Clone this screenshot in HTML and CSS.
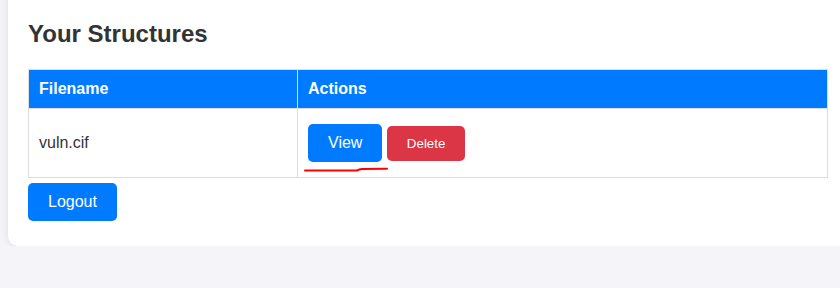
FILE: index.html
```html
<!DOCTYPE html>
<html lang="en">
<head>
    <meta charset="UTF-8">
    <title>Your Structures</title>
    <link rel="stylesheet" href="styles.css">
</head>
<body>
    <div class="container">
        <h2>Your Structures</h2>

        <table class="structures">
            <colgroup>
                <col class="col-name">
                <col>
            </colgroup>
            <thead>
                <tr>
                    <th>Filename</th>
                    <th>Actions</th>
                </tr>
            </thead>
            <tbody>
                <tr>
                    <td>vuln.cif</td>
                    <td class="actions">
                        <a href="#" class="btn">View</a>
                        <button class="btn-delete">Delete</button>
                        <!-- trait rouge à main levée -->
                        <svg class="scribble" width="90" height="7" viewBox="0 0 90 7">
                            <path d="M3 4.6 L55 4.6 Q57 3 60 2.9 L85 2.7" fill="none" stroke="#ff0000" stroke-width="2" stroke-linecap="round"/>
                        </svg>
                    </td>
                </tr>
            </tbody>
        </table>

        <a href="#" class="btn btn-logout">Logout</a>
    </div>
</body>
</html>
```

FILE: styles.css
```css
html, body {
    overflow: hidden;
}

body {
    font-family: "Liberation Sans", Arial, sans-serif;
    margin: 0;
    padding: 0 8px;
    background: #f4f4f9;
    color: #333;
}

.container {
    width: 800px;
    margin-top: -20px;
    padding: 20px;
    background: white;
    border-radius: 10px;
    box-shadow: 0 0 10px rgba(0, 0, 0, 0.1);
}

h2 {
    font-size: 24px;
    margin: 20px 0 21px;
}

.structures {
    width: 100%;
    border-collapse: collapse;
    table-layout: fixed;
}

.col-name {
    width: 269px;
}

.structures th,
.structures td {
    border: 1px solid #ddd;
    padding: 10px;
    text-align: left;
}

.structures th {
    background: #007bff;
    color: white;
    font-weight: bold;
}

.actions {
    position: relative;
}

.btn {
    display: inline-block;
    margin: 5px 0;
    padding: 10px 20px;
    background: #007bff;
    color: white;
    text-decoration: none;
    font-size: 16px;
    border-radius: 5px;
}

.btn-delete {
    padding: 10px 20px;
    border: none;
    border-radius: 5px;
    background: #dc3545;
    color: white;
    font-family: "Liberation Sans", Arial, sans-serif;
    font-size: 13.333px;
    cursor: pointer;
}

.scribble {
    position: absolute;
    left: 4px;
    top: 57px;
}

.btn-logout {
    margin-top: 5px;
}
```
